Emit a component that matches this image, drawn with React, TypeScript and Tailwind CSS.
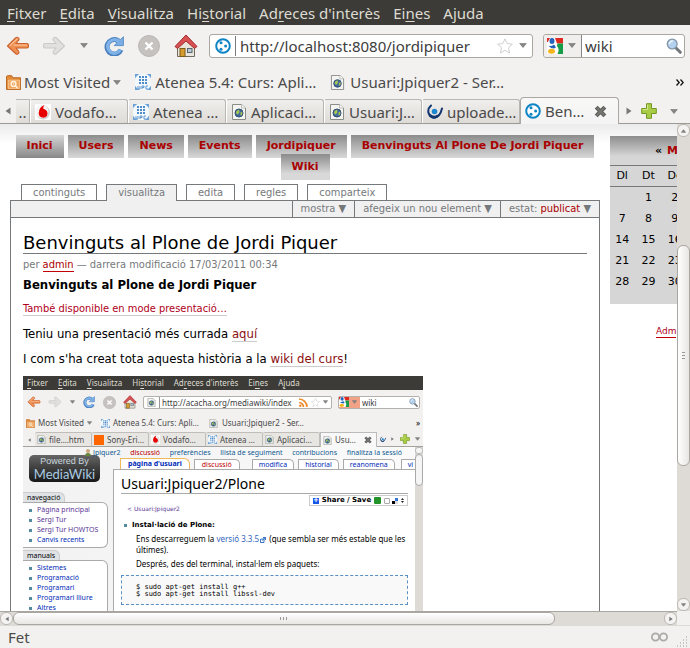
import React from "react";

const ui = "font-['Noto_Sans','Open_Sans',sans-serif]";

function Caret({ small = false }: { small?: boolean }) {
  return (
    <svg className={small ? "w-[5px] h-[4px] shrink-0" : "w-2 h-[5px] shrink-0"} viewBox="0 0 9 6" aria-hidden="true">
      <path d="M0.5 0.5h8L4.5 5.5z" fill="#858585" stroke="#6c6c6c" strokeWidth=".7" />
    </svg>
  );
}

function Arrow({ left = false, muted = false, className }: { left?: boolean; muted?: boolean; className: string }) {
  return (
    <svg className={className} viewBox="0 0 24 20" aria-hidden="true">
      <path
        transform={left ? undefined : "translate(24 0) scale(-1 1)"}
        d="M1.500 10 9.500 2Q11.500 .3 12.800 2.300 13.500 3.500 12.500 4.500L10 7.500H21Q22.500 7.500 22.500 10 22.500 12 21 12H10L12.500 15Q13.500 16.500 12.500 17.500 11.200 19 9.500 17.500Z"
        fill={muted ? "#e2e0de" : "#ef8f52"}
        stroke={muted ? "#cbc8c5" : "#c9602a"}
        strokeWidth="1.100"
        strokeLinejoin="round"
      />
      {!muted && <path d="M4 9.500 11 3M8 9.200H20.500" stroke="#f9bd91" strokeWidth="1.200" strokeLinecap="round" />}
    </svg>
  );
}

function Reload({ className }: { className: string }) {
  return (
    <svg className={className} viewBox="0 0 20 20" aria-hidden="true">
      <path d="M17 13.800A7.300 7.300 0 1 1 13.500 4.300" fill="none" stroke="#4a80bd" strokeWidth="5" />
      <path d="M19.400 .8V9.600H10.200L12.800 6.900 11 5 14.500 2.500 16.500 3.500Z" fill="#79ade3" stroke="#4a80bd" strokeWidth=".8" />
      <path d="M16.400 13.800A6.800 6.800 0 1 1 14.500 5" fill="none" stroke="#7fb2e6" strokeWidth="3.200" />
    </svg>
  );
}

function Stop({ className }: { className: string }) {
  return (
    <svg className={className} viewBox="0 0 22 22" aria-hidden="true">
      <circle cx="11" cy="11" r="10.500" fill="#c6c2c0" stroke="#bab6b4" />
      <path d="M7.500 7.500l7 7M14.500 7.500l-7 7" stroke="#fff" strokeWidth="2.400" />
    </svg>
  );
}

function Home({ className }: { className: string }) {
  return (
    <svg className={className} viewBox="0 0 24 24" aria-hidden="true">
      <path d="M3.500 12 12 5l8.500 7v10.500H3.500Z" fill="#e9e5da" stroke="#6f6a62" />
      <path d="M12 1 1 12.500 3.500 14.500 12 7l8.500 7.500 2.500-2Z" fill="#d85052" stroke="#a12a2d" strokeWidth="1" strokeLinejoin="round" />
      <rect x="6" y="14.500" width="5" height="8" fill="#d59b2c" stroke="#7b5a1c" />
      <rect x="13.500" y="14.500" width="4.500" height="4" fill="#b7c8d6" stroke="#58656e" />
    </svg>
  );
}

function PageIcon({ className }: { className: string }) {
  return (
    <svg className={className} viewBox="0 0 16 16" aria-hidden="true">
      <path d="M1.500 .5H10.500L14.500 4V15.500H1.500Z" fill="#f4f4f1" stroke="#8a8c87" />
      <path d="M10.500 .5V4H14.500" fill="#fff" stroke="#a3a5a0" strokeWidth=".7" />
      <circle cx="8" cy="9" r="4" fill="#41699c" stroke="#2d4d75" />
      <path d="M5.500 7 8 5.500 8.500 8 7 10.500 5 9.500ZM9.500 8.500 11.500 7.500 11 11 9.500 11.500Z" fill="#a9c653" />
    </svg>
  );
}

function PloneIcon({ className }: { className: string }) {
  return (
    <svg className={className} viewBox="0 0 16 16" aria-hidden="true">
      <circle cx="8" cy="8" r="6.800" fill="#fff" stroke="#0d84c4" strokeWidth="2" />
      <circle cx="6" cy="4.800" r="1.500" fill="#0d84c4" />
      <circle cx="10.600" cy="8" r="1.500" fill="#0d84c4" />
      <circle cx="6" cy="11.200" r="1.500" fill="#0d84c4" />
    </svg>
  );
}

function UpcIcon({ className }: { className: string }) {
  return (
    <svg className={className} viewBox="0 0 16 16" aria-hidden="true">
      <rect width="16" height="16" fill="#6ba1d4" />
      <circle cx="8" cy="8" r="8.600" fill="#f3f8fd" />
      <path
        d="M4 2h2v2H4zM7 2h2v2H7zM10 2h2v2h-2zM4 5h2v2H4zM7 5h2v2H7zM10 5h2v2h-2zM4 8h2v2H4zM7 8h2v2H7zM10 8h2v2h-2z"
        fill="#4d8cc8"
      />
      <path d="M3 12v3h2v-3M7 15v-3h2v1.500H7M13 12h-2v3h2" fill="none" stroke="#5e98cf" />
    </svg>
  );
}

function VodafoneIcon({ className }: { className: string }) {
  return (
    <svg className={className} viewBox="0 0 16 16" aria-hidden="true">
      <rect width="16" height="16" fill="#fff" />
      <circle cx="8" cy="8.500" r="7" fill="#d2d2d2" />
      <circle cx="7" cy="7.500" r="6.500" fill="#f4f4f4" />
      <path d="M9.500 1Q8 2.500 8.300 4.800 12.500 5.800 12.500 9.500 12.300 13.500 8.300 13.700 3.700 13.500 3.700 9 4 3 9.500 1Z" fill="#e60000" />
    </svg>
  );
}

function BlueSwirl({ className }: { className: string }) {
  return (
    <svg className={className} viewBox="0 0 16 16" aria-hidden="true">
      <path d="M4 1.500Q.2 5 1.700 9.500 3.500 13.700 7.500 13.700 13 13 15 4.500" fill="none" stroke="#12366f" strokeWidth="2" strokeLinecap="round" />
      <path d="M2.500 11Q7 15 11 11.500" fill="none" stroke="#12366f" strokeWidth="2.600" />
      <circle cx="7.500" cy="7.500" r="2.800" fill="#1d86d0" />
    </svg>
  );
}

function FolderIcon({ className }: { className: string }) {
  return (
    <svg className={className} viewBox="0 0 16 16" aria-hidden="true">
      <path d="M.5 15.500V1.500L1.500 .7H6L7.500 3H15.500V15.500Z" fill="#e38b38" stroke="#b96017" />
      <path d="M2.500 14.500V5.500H14.500V14.500Z" fill="#f0a65d" stroke="#fbd7ab" strokeWidth=".7" />
      <circle cx="8" cy="9.500" r="2.600" fill="none" stroke="#fff5e6" strokeWidth="1.400" />
      <path d="M10 11.500 12 13.500M8 9.500h.1" stroke="#fff5e6" strokeWidth="1.500" strokeLinecap="round" />
    </svg>
  );
}

function GoogleIcon({ className }: { className: string }) {
  return (
    <svg className={className} viewBox="0 0 16 16" aria-hidden="true">
      <rect width="16" height="16" fill="#fff" />
      <path d="M8 0H16V5.500H10Z" fill="#de2c22" />
      <path d="M10.500 5.500H16V16H10.500Q13 11 10 8Z" fill="#169b47" />
      <path d="M0 0H3L.8 4H0Z" fill="#de2c22" />
      <ellipse cx="5" cy="3" rx="2.500" ry="2.900" fill="#2463be" />
      <path d="M1 7.500Q4 9 7 6.500L9 9.500 7 10.500Q3 10 1 7.500Z" fill="#2463be" />
      <ellipse cx="4.500" cy="13.300" rx="3.500" ry="2.500" fill="#f3b51b" />
    </svg>
  );
}

function SearchIcon({ className }: { className: string }) {
  return (
    <svg className={className} viewBox="0 0 16 16" aria-hidden="true">
      <path d="M9.500 9.500 14.300 14.300" stroke="#73767a" strokeWidth="3" strokeLinecap="round" />
      <circle cx="6.200" cy="6" r="4.900" fill="#b3d2ef" stroke="#8595a6" strokeWidth="1.300" />
      <path d="M3.500 6A3 3 0 0 1 7 3" fill="none" stroke="#f2f8fe" strokeWidth="1.300" />
    </svg>
  );
}

function Star({ className }: { className: string }) {
  return (
    <svg className={className} viewBox="0 0 16 16" aria-hidden="true">
      <path d="M8 .8 10.200 5.600 15.400 6.200 11.500 9.700 12.600 15 8 12.300 3.400 15 4.500 9.700 .6 6.200 5.800 5.600Z" fill="#fff" stroke="#cfcfcf" strokeLinejoin="round" />
    </svg>
  );
}

function Plus({ className }: { className: string }) {
  return (
    <svg className={className} viewBox="0 0 16 16" aria-hidden="true">
      <path d="M5.500 .7H10.500V5.500H15.300V10.500H10.500V15.300H5.500V10.500H.7V5.500H5.500Z" fill="#a8cc45" stroke="#739724" strokeLinejoin="round" />
      <path d="M6.500 1.700V6.500H1.700" fill="none" stroke="#d0e78f" />
    </svg>
  );
}

function Cross({ className }: { className: string }) {
  return (
    <svg className={className} viewBox="0 0 12 12" aria-hidden="true">
      <path d="M2 2 10 10M10 2 2 10" stroke="#5f615d" strokeWidth="3.800" />
      <path d="M2.500 2.500 9.500 9.500M9.500 2.500 2.500 9.500" stroke="#767872" strokeWidth="1.600" />
    </svg>
  );
}

function Side({ left = false, className }: { left?: boolean; className: string }) {
  return (
    <svg className={className} viewBox="0 0 6 8" aria-hidden="true">
      <path d={left ? "M5.500 .5V7.500L.5 4Z" : "M.5 .5V7.500L5.500 4Z"} fill="#777" />
    </svg>
  );
}

type MenuEntry = [string, string, string];
const menu: MenuEntry[] = [
  ["", "F", "itxer"],
  ["", "E", "dita"],
  ["", "V", "isualitza"],
  ["Hi", "s", "torial"],
  ["Ad", "r", "eces d'interès"],
  ["Ei", "n", "es"],
  ["A", "j", "uda"],
];

function MenuBar({ small = false }: { small?: boolean }) {
  return (
    <nav
      className={
        small
          ? "flex h-[14px] shrink-0 items-center gap-[10px] bg-[#3c3b37] pl-1 text-[8px] leading-none text-[#dfdbd2]"
          : "flex h-[25px] shrink-0 items-center gap-[13px] bg-[#3c3b37] pl-[7px] text-[15px] leading-5 text-[#dfdbd2]"
      }
    >
      {menu.map(([a, b, c]) => (
        <button key={a + b + c} className="whitespace-nowrap">
          {a}
          <span className="underline underline-offset-2">{b}</span>
          {c}
        </button>
      ))}
    </nav>
  );
}

function NavigationBar() {
  return (
    <div className="flex h-[41px] shrink-0 items-center pl-[6px] pr-[5px]">
      <button aria-label="Enrere"><Arrow left className="h-5 w-6" /></button>
      <button aria-label="Endavant" className="ml-3"><Arrow muted className="h-5 w-6" /></button>
      <button aria-label="Historial recent" className="ml-[10px] flex h-5 w-4 items-center justify-center"><Caret /></button>
      <button aria-label="Actualitza" className="ml-3"><Reload className="size-5" /></button>
      <button aria-label="Atura" className="ml-[14px]"><Stop className="size-[22px]" /></button>
      <button aria-label="Inici" className="ml-[14px]"><Home className="size-6" /></button>
      <div className="ml-[11px] flex h-6 min-w-0 flex-1 items-center rounded-[3px] border border-[#aaa6a0] bg-white pl-[5px] pr-[3px]">
        <PloneIcon className="size-4 shrink-0" />
        <span className="ml-1 h-5 w-px bg-[#7b7b7b]" />
        <input aria-label="Adreça" defaultValue="http://localhost:8080/jordipiquer" className="ml-1 h-5 min-w-0 flex-1 bg-transparent text-[15px] leading-5 text-[#3c3c3c] outline-none" />
        <button aria-label="Afegeix a les adreces"><Star className="size-4" /></button>
        <button aria-label="Mostra adreces" className="ml-1 flex h-5 w-3 items-center justify-center"><Caret /></button>
      </div>
      <div className="ml-[10px] flex h-6 w-[142px] shrink-0 items-center rounded-[3px] border border-[#aaa6a0] bg-white pr-[2px]">
        <button aria-label="Motor de cerca" className="flex h-[22px] w-[38px] shrink-0 items-center justify-between rounded-l-[3px] border-r border-[#858585] bg-[#f0efed] pl-[3px] pr-[5px]">
          <GoogleIcon className="size-4 shrink-0" /><Caret />
        </button>
        <input aria-label="Cerca" defaultValue="wiki" className="ml-[3px] h-5 w-full min-w-0 bg-transparent text-[15px] leading-5 text-[#3c3c3c] outline-none" />
        <button aria-label="Cerca ara" className="shrink-0"><SearchIcon className="size-4" /></button>
      </div>
    </div>
  );
}

function BookmarkBar() {
  return (
    <div className="flex h-8 shrink-0 items-center pl-[6px] pr-[6px] text-[15px] leading-5 text-[#4a4a4a]">
      <button className="flex items-center gap-[3px] whitespace-nowrap"><FolderIcon className="size-[15px]" />Most Visited <Caret /></button>
      <a href="#atenea" className="ml-[14px] flex items-center gap-1 whitespace-nowrap"><UpcIcon className="size-4" />Atenea 5.4: Curs: Apli…</a>
      <a href="#usuari" className="ml-[14px] flex items-center gap-[5px] whitespace-nowrap"><PageIcon className="size-[15px]" />Usuari:Jpiquer2 - Ser…</a>
      <button aria-label="Més adreces" className="ml-auto">
        <svg className="h-[7px] w-[8px]" viewBox="0 0 8 7"><path d="M.5 .5 3.200 3.500 .5 6.500M4.500 .5 7.200 3.500 4.500 6.500" fill="none" stroke="#111" strokeWidth="1.300" /></svg>
      </button>
    </div>
  );
}

const tabs = [
  { label: "Vodafo…", Icon: VodafoneIcon },
  { label: "Atenea …", Icon: UpcIcon },
  { label: "Aplicaci…", Icon: PageIcon },
  { label: "Usuari:J…", Icon: PageIcon },
  { label: "uploade…", Icon: BlueSwirl },
];

function TabStrip() {
  return (
    <div className="flex h-[26px] shrink-0 items-end border-b border-[#9c9a96] text-[15px] leading-5 text-[#4a4a4a]">
      <button aria-label="Pestanyes anteriors" className="flex h-6 w-4 shrink-0 items-center justify-center"><Side left className="h-2 w-[6px]" /></button>
      <button aria-label="Pestanya anterior" className="h-6 w-[14px] shrink-0 border-t border-r border-[#b9b6b2] bg-linear-to-b from-[#f0efed] to-[#dedbd7] text-center">..</button>
      {tabs.map(({ label, Icon }) => (
        <button key={label} className="flex h-6 w-[98px] min-w-0 items-center gap-1 rounded-t-[3px] border-t border-r border-l border-t-[#b9b6b2] border-r-[#b9b6b2] border-l-white bg-linear-to-b from-[#f0efed] to-[#dedbd7] pl-1">
          <Icon className="size-4 shrink-0" /><span className="whitespace-nowrap">{label}</span>
        </button>
      ))}
      <div className="-mb-px flex h-[27px] w-[99px] shrink-0 items-center rounded-t-[4px] border border-b-0 border-[#aaa7a3] bg-linear-to-b from-[#f8f8f7] to-[#f4f4f4] pl-1">
        <button className="flex items-center gap-1"><PloneIcon className="size-4" />Ben…</button>
        <button aria-label="Tanca" className="mr-[11px] ml-auto"><Cross className="size-[13px]" /></button>
      </div>
      <button aria-label="Pestanyes següents" className="ml-[7px] flex h-6 w-[6px] shrink-0 items-center"><Side className="h-2 w-[6px]" /></button>
      <button aria-label="Pestanya nova" className="ml-[9px] flex h-6 shrink-0 items-center"><Plus className="size-4" /></button>
      <button aria-label="Llista de pestanyes" className="mx-auto flex h-6 items-center"><Caret /></button>
    </div>
  );
}

const sections = ["Inici", "Users", "News", "Events", "Jordipiquer", "Benvinguts Al Plone De Jordi Piquer"];
const views = ["continguts", "visualitza", "edita", "regles", "comparteix"];

function SiteNav() {
  return (
    <nav className="h-[45px] text-[11px] leading-[22px] font-bold text-[#a00]">
      <div className="flex justify-center gap-1">
        {sections.map((s, i) => (
          <a
            key={s}
            href={`#${i}`}
            className={
              i === 0
                ? "h-[23px] bg-linear-to-b from-[#d6d6d6] to-[#888] px-[11px] whitespace-nowrap"
                : "h-[23px] bg-linear-to-b from-[#8c8c8c] to-[#d8d8d8] px-[11px] whitespace-nowrap"
            }
          >
            {s}
          </a>
        ))}
      </div>
      <div className="-mt-1 flex justify-center">
        <a href="#wiki" className="h-[26px] bg-linear-to-b from-[#8c8c8c] to-[#d8d8d8] to-75% px-[11px] leading-[26px]">Wiki</a>
      </div>
    </nav>
  );
}

function Article() {
  return (
    <article className="px-3 text-[13px] leading-[14px] text-black">
      <h1 className="mt-[14px] border-b border-[#76797c] font-['DejaVu_Sans',sans-serif] text-[18px] leading-[21px]">Benvinguts al Plone de Jordi Piquer</h1>
      <div className="font-['DejaVu_Sans_Condensed','DejaVu_Sans',sans-serif]">
        <p className="mt-1 text-[11px] leading-[14px] text-[#76797c]">
          per <a href="#admin" className="border-b border-red-700 text-[#a00]">admin</a> — darrera modificació 17/03/2011 00:34
        </p>
        <p className="mt-[6px] font-bold">Benvinguts al Plone de Jordi Piquer</p>
        <p className="mt-[10px] text-[11px]"><a href="#presentacio" className="border-b border-[#ccc] text-[#b00020]">També disponible en mode presentació…</a></p>
        <p className="mt-[11px]">Teniu una presentació més currada <a href="#aqui" className="border-b border-[#ccc] text-[#8b1010]">aquí</a></p>
        <p className="mt-[11px]">I com s'ha creat tota aquesta història a la <a href="#curs" className="border-b border-[#ccc] text-[#8b1010]">wiki del curs</a>!</p>
      </div>
      <MiniBrowser />
    </article>
  );
}

function SideBox({ title, items, visited }: { title: string; items: string[]; visited: number }) {
  return (
    <section className="mb-[2px]">
      <h3 className="h-[10px] w-fit rounded-tr-[6px] border-t border-r border-[#ccc] bg-[#dfe3e5] px-1 text-[7px] leading-[9px] text-black">{title}</h3>
      <ul className="rounded-r-[6px] border border-l-0 border-[#aaa] bg-white py-[2px] pl-[6px] text-[7px] leading-[10px]">
        {items.map((t, i) => (
          <li key={t} className="flex items-center gap-[5px] whitespace-nowrap">
            <span className="size-[3px] bg-[#538aa0]" />
            <a href="#pagina" className={i < visited ? "text-[#5a3696]" : "text-[#002bb8]"}>{t}</a>
          </li>
        ))}
      </ul>
    </section>
  );
}

const miniTabs = [
  { label: "file….htm", Icon: PageIcon },
  { label: "Sony-Eri…", Icon: null },
  { label: "Vodafo…", Icon: VodafoneIcon },
  { label: "Atenea …", Icon: UpcIcon },
  { label: "Aplicaci…", Icon: PageIcon },
];

function MiniBrowser() {
  return (
    <figure className={`mt-[10px] flex h-[260px] w-[400px] flex-col overflow-hidden bg-[#f2f1f0] ${ui}`}>
      <MenuBar small />
      <div className="flex h-6 shrink-0 items-center pl-1 pr-[3px]">
        <Arrow left className="h-3 w-[14px]" />
        <Arrow muted className="ml-[7px] h-3 w-[14px]" />
        <span className="mx-2 flex"><Caret small /></span>
        <Reload className="size-3" />
        <Stop className="ml-2 size-[13px]" />
        <Home className="ml-[7px] size-[14px]" />
        <div className="ml-[6px] flex h-[13px] min-w-0 flex-1 items-center rounded-[2px] border border-[#b5b2ae] bg-white px-[3px]">
          <PageIcon className="size-[9px] shrink-0" />
          <input aria-label="Adreça de la wiki" defaultValue="http://acacha.org/mediawiki/index" className="ml-[3px] h-[11px] min-w-0 flex-1 border-l border-[#999] pl-[2px] text-[8px] leading-[11px] text-[#3c3c3c] outline-none" />
          <svg className="size-[9px] shrink-0" viewBox="0 0 9 9"><path d="M0 1A8 8 0 0 1 8 9M0 4.500A4.500 4.500 0 0 1 4.500 9" fill="none" stroke="#ef8b2c" strokeWidth="1.700" /><circle cx="1.300" cy="7.700" r="1.200" fill="#ef8b2c" /></svg>
          <Star className="mx-[3px] size-[9px] shrink-0" /><Caret small />
        </div>
        <div className="ml-[6px] flex h-[13px] w-[82px] shrink-0 items-center rounded-[2px] border border-[#b5b2ae] bg-white pr-px">
          <span className="flex h-[11px] w-[21px] shrink-0 items-center justify-between bg-[#f1a287] pr-[3px]"><GoogleIcon className="size-[10px]" /><Caret small /></span>
          <input aria-label="Cerca a la wiki" defaultValue="wiki" className="ml-[2px] h-[11px] w-full min-w-0 text-[8px] leading-[11px] text-[#3c3c3c] outline-none" />
          <SearchIcon className="size-[9px] shrink-0" />
        </div>
      </div>
      <div className="flex h-[18px] shrink-0 items-center pl-[3px] pr-[3px] text-[8px] leading-none text-[#4a4a4a]">
        <span className="flex items-center gap-[3px] whitespace-nowrap"><FolderIcon className="size-[9px]" />Most Visited <Caret small /></span>
        <span className="ml-[9px] flex items-center gap-[3px] whitespace-nowrap"><UpcIcon className="size-[9px]" />Atenea 5.4: Curs: Apli…</span>
        <span className="ml-[10px] flex items-center gap-1 whitespace-nowrap"><PageIcon className="size-[9px]" />Usuari:Jpiquer2 - Ser…</span>
        <span className="ml-auto text-black">»</span>
      </div>
      <div className="flex h-[15px] shrink-0 items-end border-b border-[#a5a39f] text-[8px] leading-none text-[#4a4a4a]">
        <span className="flex h-[13px] w-3 items-center justify-center"><Side left className="h-1 w-[3px]" /></span>
        {miniTabs.map(({ label, Icon }) => (
          <span key={label} className="flex h-[14px] w-[57px] min-w-0 items-center gap-[3px] rounded-t-[2px] border-t border-r border-[#c1beba] bg-[#e8e6e3] pl-[2px] whitespace-nowrap">
            {Icon ? <Icon className="size-[9px] shrink-0" /> : <span className="size-[10px] shrink-0 bg-[#f60]" />}
            {label}
          </span>
        ))}
        <span className="-mb-px flex h-[15px] w-[57px] items-center gap-[3px] border border-b-0 border-[#bbb] bg-[#f8f8f8] pl-[2px]">
          <PageIcon className="size-[9px]" />Usu…<Cross className="mr-1 ml-auto size-2" />
        </span>
        <span className="flex h-[14px] flex-1 items-center justify-between px-[3px]"><BlueSwirl className="h-[9px] w-[6px]" /><Side className="h-1 w-[3px]" /><Plus className="size-[10px]" /><Caret small /></span>
      </div>
      <div className="flex min-h-0 flex-1 bg-linear-to-r from-[#f2f2f2] to-[#fafafa]">
        <div className="flex w-[90px] shrink-0 flex-col pr-[5px] pt-2">
          <div className="mb-[10px] ml-[6px] flex h-[27px] w-[71px] shrink-0 flex-col items-center justify-center rounded-[5px] bg-linear-to-b from-[#666] to-[#191919] text-[#a9cbe2]">
            <span className="font-['Liberation_Sans',sans-serif] text-[9px] leading-[10px] text-[#c9d6de]">Powered By</span>
            <span className="font-['Lato',sans-serif] text-[13px] leading-[16px]">MediaWiki</span>
          </div>
          <SideBox title="navegació" items={["Pàgina principal", "Sergi Tur", "Sergi Tur HOWTOS", "Canvis recents"]} visited={3} />
          <SideBox title="manuals" items={["Sistemes", "Programació", "Programari", "Programari lliure", "Altres"]} visited={0} />
        </div>
        <div className="flex min-w-0 flex-1 flex-col">
          <div className="-ml-7 flex h-[11px] shrink-0 items-center justify-between pr-[13px] text-[7px] leading-none whitespace-nowrap text-[#0f5a92]">
            <span className="flex items-center gap-[2px]"><svg className="h-2 w-[6px]" viewBox="0 0 6 8"><circle cx="3" cy="2" r="2" fill="#cba67b" /><path d="M0 7Q0 4 3 4T6 7Z" fill="#66863e" /></svg>Jpiquer2</span>
            <a href="#d" className="text-[#ba0000]">discussió</a><a href="#p">preferències</a><a href="#l">llista de seguiment</a><a href="#c">contribucions</a><a href="#f">finalitza la sessió</a>
          </div>
          <div className="flex h-[11px] shrink-0 items-end gap-1 overflow-hidden pl-[7px] text-[7px] leading-[9px] whitespace-nowrap text-[#002bb8]">
            <span className="h-[11px] rounded-tr-[6px] border border-b-0 border-[#f0b957] bg-white px-[7px] font-bold">pàgina d'usuari</span>
            <span className="mr-2 h-[10px] rounded-tr-[5px] border border-b-0 border-[#aaa] bg-white px-[7px] text-[#ba0000]">discussió</span>
            <span className="h-[10px] rounded-tr-[5px] border border-b-0 border-[#aaa] bg-white px-[6px]">modifica</span>
            <span className="h-[10px] rounded-tr-[5px] border border-b-0 border-[#aaa] bg-white px-[6px]">historial</span>
            <span className="h-[10px] rounded-tr-[5px] border border-b-0 border-[#aaa] bg-white px-[6px]">reanomena</span>
            <span className="ml-auto h-[10px] border border-r-0 border-b-0 border-[#aaa] bg-white pl-[6px] pr-[2px]">vi</span>
          </div>
          <div className="min-h-0 flex-1 border-t border-l border-[#aaa] bg-white pl-[7px] pr-[7px]">
            <h2 className="mt-[5px] border-b border-[#aaa] text-[14px] leading-[18px] text-black">Usuari:Jpiquer2/Plone</h2>
            <button className="mt-px ml-auto flex h-[11px] w-[99px] items-center justify-between border border-[#ccc] px-[3px] font-['DejaVu_Sans',sans-serif] text-[7px] leading-none font-bold">
              <span className="flex size-[6px] items-center justify-center bg-[#1758e7] text-[7px] text-white">+</span>Share / Save
              <span className="size-[7px] rounded-[1px] bg-[#229229]" /><span className="size-[6px] rounded-[1px] border border-[#aaa]" />
              <span className="grid size-[6px] grid-cols-2"><i className="bg-white" /><i className="bg-[#3274d1]" /><i className="bg-black" /><i className="bg-[#ddd]" /></span>
              <svg className="h-[5px] w-[3px]" viewBox="0 0 3 5"><path d="M0 2 1.500 0 3 2ZM0 3H3L1.500 5Z" fill="#222" /></svg>
            </button>
            <div className="font-['DejaVu_Sans',sans-serif] text-[7px] leading-[11px] text-black">
              <p className="pl-[6px] text-[6px] leading-[6px] text-[#5a3696]">&lt; Usuari:Jpiquer2</p>
              <p className="mt-2 flex items-center gap-[5px] pl-[3px] font-bold"><span className="size-[3px] bg-[#538aa0]" />Instal·lació de Plone:</p>
              <p className="mt-[2px] pl-[15px] font-['Noto_Sans',sans-serif] text-[8px] whitespace-nowrap">Ens descarreguem la <a href="#v" className="text-[#36b]">versió 3.3.5<svg className="mx-px inline size-[6px]" viewBox="0 0 6 6"><path d="M1 2H4V5.500H.5V2M2 3.500 5.500.5M3 .5H5.500V3" fill="none" stroke="#3872c0" /></svg></a> (que sembla ser més estable que les<br />últimes).</p>
              <p className="mt-[3px] pl-[15px] font-['Noto_Sans',sans-serif] text-[8px]">Després, des del terminal, instal·lem els paquets:</p>
              <pre className="mt-[6px] h-[30px] border border-dashed border-[#5a8fc4] bg-[#f9f9f9] pt-2 pl-[14px] font-['DejaVu_Sans_Mono',monospace] text-[7px] leading-[7px]">{"$ sudo apt-get install g++\n$ sudo apt-get install libssl-dev"}</pre>
            </div>
          </div>
        </div>
        <div className="flex w-2 shrink-0 flex-col bg-[#dedbd7]">
          <span className="h-[7px] rounded-[3px] border border-[#bbb] bg-[#f5f5f5]" />
          <span className="h-8 rounded-[4px] border border-[#aaa] bg-[#f5f5f5]" />
        </div>
      </div>
    </figure>
  );
}

const weeks = [["", "1", "2"], ["7", "8", "9"], ["14", "15", "16"], ["21", "22", "23"], ["28", "29", "30"]];

function Calendar() {
  return (
    <aside className="mt-3 w-[67px] shrink-0 overflow-hidden text-[11px] text-black">
      <div className="h-[168px] bg-[#d6d6d6]">
        <div className="flex h-[29px] items-center gap-[5px] bg-linear-to-b from-[#8e8e8e] to-[#d6d6d6] to-70% pt-[2px] pl-[45px] font-bold">
          <button aria-label="Mes anterior">«</button><a href="#mes" className="text-[#a00]">M</a>
        </div>
        <table className="w-[79px] table-fixed border-collapse text-center">
          <thead><tr className="h-[21px] border-y border-[#76797c]">{["Dl", "Dt", "Dc"].map((d) => <th key={d} className="p-0 pr-[2px] font-normal">{d}</th>)}</tr></thead>
          <tbody>
            {weeks.map((w) => <tr key={w[1]} className="h-[21px] leading-[21px]">{w.map((d, i) => <td key={i} className="p-0 pr-[2px]">{d}</td>)}</tr>)}
          </tbody>
        </table>
      </div>
      <a href="#adm" className="mt-[22px] ml-[46px] block w-fit border-b border-red-700 text-[9px] leading-[11px] text-[#b00020]">Adm</a>
    </aside>
  );
}

function Grip({ vertical = false }: { vertical?: boolean }) {
  return (
    <span className={vertical ? "flex flex-col gap-[2px]" : "flex gap-[2px]"}>
      {[0, 1, 2].map((i) => <i key={i} className={vertical ? "h-px w-[3px] bg-[#999]" : "h-[3px] w-px bg-[#999]"} />)}
    </span>
  );
}

const roundButton = "flex size-[13px] shrink-0 items-center justify-center rounded-[6px] border border-[#bbb7b2] bg-[#f4f3f2]";

export default function App() {
  return (
    <div className={`flex h-screen flex-col overflow-hidden bg-[#f2f1f0] ${ui}`}>
      <MenuBar />
      <NavigationBar />
      <BookmarkBar />
      <TabStrip />
      <div className="flex min-h-0 flex-1">
        <div className="flex min-w-0 flex-1 flex-col">
          <main className="flex min-h-0 flex-1 gap-[10px] overflow-hidden bg-white bg-linear-to-b from-[#ebebeb] to-white to-[20px] pl-[10px] font-['DejaVu_Sans',sans-serif]">
            <div className="min-w-0 flex-1 pt-[11px]">
              <SiteNav />
              <div className="mt-1 flex gap-[9px] pl-[11px] font-['DejaVu_Sans_Condensed','DejaVu_Sans',sans-serif] text-[11px] leading-[16px] text-[#76797c]">
                {views.map((v) => (
                  <a
                    key={v}
                    href={`#${v}`}
                    className={
                      v === "visualitza"
                        ? "relative z-10 -mb-px h-[17px] border border-b-0 border-[#76797c] bg-[#f0f0f0] px-[11px]"
                        : "h-4 border border-b-0 border-[#76797c] bg-white px-[11px]"
                    }
                  >
                    {v}
                  </a>
                ))}
              </div>
              <div className="border border-[#76797c] bg-white">
                <div className="flex h-[17px] justify-end border-b border-[#76797c] bg-[#f0f0f0] font-['DejaVu_Sans_Condensed','DejaVu_Sans',sans-serif] text-[11px] leading-4 whitespace-nowrap text-[#76797c]">
                  <button className="border-l border-[#76797c] px-2">mostra ▼</button>
                  <button className="border-l border-[#76797c] px-2">afegeix un nou element ▼</button>
                  <button className="border-l border-[#76797c] px-2">estat: <span className="text-[#a00]">publicat</span> ▼</button>
                </div>
                <Article />
              </div>
            </div>
            <Calendar />
          </main>
          <div className="flex h-[14px] shrink-0 items-center border-t border-[#aaa6a1] bg-[#dedbd7]">
            <button aria-label="Esquerra" className={roundButton}><Side left className="h-[6px] w-1" /></button>
            <div className="flex h-[13px] w-4/5 items-center justify-center rounded-[6px] border border-[#aaa6a1] bg-linear-to-b from-white to-[#e8e6e3]"><Grip /></div>
            <button aria-label="Dreta" className={`ml-auto ${roundButton}`}><Side className="h-[6px] w-1" /></button>
          </div>
        </div>
        <div className="mb-[14px] flex w-[13px] shrink-0 flex-col bg-[#dedbd7]">
          <button aria-label="Amunt" className={roundButton}><span className="rotate-180"><Caret small /></span></button>
          <div className="w-full flex-[108]" />
          <div className="flex w-full flex-[220] items-center justify-center rounded-[6px] border border-[#aaa6a1] bg-linear-to-r from-white to-[#e8e6e3]"><Grip vertical /></div>
          <div className="w-full flex-[133]" />
          <button aria-label="Avall" className={roundButton}><Caret small /></button>
        </div>
      </div>
      <footer className="flex h-[23px] shrink-0 items-center border-t border-[#dedbd7] pl-2 text-[15px] leading-5 text-[#4a4a4a]">
        Fet
        <svg className="ml-auto h-[10px] w-[17px]" viewBox="0 0 17 10"><circle cx="4.500" cy="5" r="3.600" fill="none" stroke="#aaa" strokeWidth="1.800" /><circle cx="12.500" cy="5" r="3.600" fill="none" stroke="#aaa" strokeWidth="1.800" /></svg>
        <svg className="mr-[2px] ml-2 size-3 self-end" viewBox="0 0 12 12"><path d="M10 1h1M7 4h1M10 4h1M4 7h1M7 7h1M10 7h1M1 10h1M4 10h1M7 10h1M10 10h1" stroke="#9d9995" /></svg>
      </footer>
    </div>
  );
}
